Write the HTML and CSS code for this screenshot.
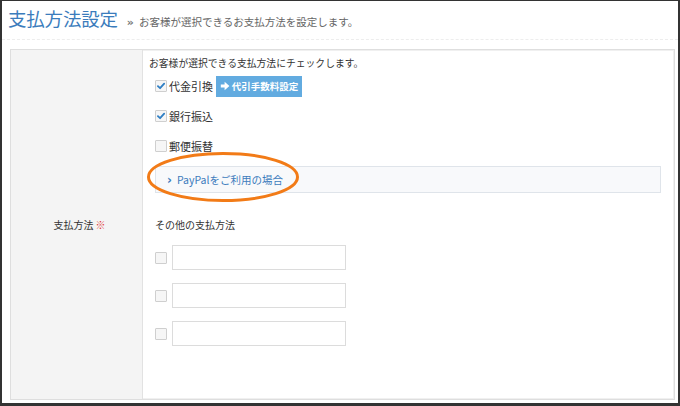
FILE: index.html
```html
<!DOCTYPE html>
<html lang="ja">
<head>
<meta charset="utf-8">
<link rel="stylesheet" href="styles.css">
</head>
<body>
<div class="frame">
  <header class="page-head">
    <h1 class="title">支払方法設定</h1>
    <span class="raquo">»</span>
    <span class="subtitle">お客様が選択できるお支払方法を設定します。</span>
  </header>
  <div class="table">
    <div class="label-cell"><span>支払方法</span><span class="req">※</span></div>
    <div class="value-cell">
      <p class="note">お客様が選択できる支払方法にチェックします。</p>
      <div class="opt opt-first">
        <span class="cb checked"><svg viewBox="0 0 12 12" width="12" height="12"><path d="M2.3 6.2 L4.9 8.6 L9.8 3.2" fill="none" stroke="#2f7fc4" stroke-width="2.2" stroke-linecap="round" stroke-linejoin="round"/></svg></span>
        <span class="opt-label">代金引換</span>
        <span class="btn"><svg class="btn-arrow" viewBox="0 0 10 10" width="10" height="10"><path d="M0.8 3.4 H4.6 V0.8 L9.4 5 L4.6 9.2 V6.6 H0.8 Z" fill="#fff"/></svg>代引手数料設定</span>
      </div>
      <div class="opt">
        <span class="cb checked"><svg viewBox="0 0 12 12" width="12" height="12"><path d="M2.3 6.2 L4.9 8.6 L9.8 3.2" fill="none" stroke="#2f7fc4" stroke-width="2.2" stroke-linecap="round" stroke-linejoin="round"/></svg></span>
        <span class="opt-label">銀行振込</span>
      </div>
      <div class="opt">
        <span class="cb"></span>
        <span class="opt-label">郵便振替</span>
      </div>
      <div class="paypal"><span class="chev">›</span>PayPalをご利用の場合</div>
      <p class="other">その他の支払方法</p>
      <div class="other-row"><span class="cb"></span><span class="input"></span></div>
      <div class="other-row"><span class="cb"></span><span class="input"></span></div>
      <div class="other-row"><span class="cb"></span><span class="input"></span></div>
    </div>
  </div>
  <svg class="annot" viewBox="0 0 154 52" width="154" height="52"><ellipse cx="77" cy="26" rx="74.5" ry="23.5" fill="none" stroke="#f27b17" stroke-width="3"/></svg>
</div>
</body>
</html>
```
FILE: styles.css
```css
* { box-sizing: border-box; }
html, body { margin: 0; padding: 0; background: #333; }
body { font-family: "Noto Sans CJK JP", "Noto Sans", sans-serif; color: #333; }
.frame {
  position: relative;
  width: 680px;
  height: 406px;
  background: #fff;
  border-style: solid;
  border-color: #333;
  border-width: 1px 2px 3px 2px;
  display: flex;
  flex-direction: column;
}
.page-head {
  height: 39px;
  border-bottom: 1px dashed #ededed;
  display: flex;
  align-items: baseline;
  padding-left: 6px;
  padding-top: 4px;
}
.title {
  margin: 0;
  font-size: 18.5px;
  font-weight: normal;
  color: #3b7cbc;
  line-height: 26px;
  letter-spacing: -0.2px;
}
.raquo {
  font-family: "DejaVu Sans", sans-serif;
  font-size: 11px;
  color: #777;
  margin-left: 9px;
  margin-right: 5px;
  font-weight: bold;
}
.subtitle { font-size: 10.5px; color: #666; }
.table {
  margin: 9px 0 0 8px;
  width: 665px;
  height: 351px;
  border: 1px solid #dedede;
  box-shadow: inset 0 0 0 1px #f0f0f0;
  display: flex;
}
.label-cell {
  width: 132px;
  background: #f4f4f4;
  border-right: 1px solid #e2e2e2;
  display: flex;
  align-items: center;
  justify-content: center;
  font-size: 10px;
  color: #333;
  padding-left: 6px;
}
.req { color: #e23c3c; margin-left: 2px; font-size: 10px; }
.value-cell {
  flex: 1;
  padding: 6px 11px 0 6px;
  display: flex;
  flex-direction: column;
}
.note { margin: 0; font-size: 9.8px; line-height: 14px; }
.opt {
  display: flex;
  align-items: center;
  padding-left: 6px;
  height: 22px;
  margin-top: 6px;
}
.opt + .opt { margin-top: 8px; }
.opt-first { margin-top: 5px; }
.cb {
  width: 12px;
  height: 12px;
  border: 1px solid #cfcfcf;
  background: #f6f6f6;
  border-radius: 1px;
  display: inline-flex;
  align-items: center;
  justify-content: center;
  flex: none;
}
.cb svg { display: block; }
.opt-label { font-size: 11px; margin-left: 2px; }
.btn {
  margin-left: 3px;
  height: 21px;
  width: 86px;
  background: #62abe0;
  color: #fff;
  font-size: 9.5px;
  font-weight: bold;
  display: inline-flex;
  align-items: center;
  justify-content: center;
}
.btn-arrow { margin-right: 2px; }
.paypal {
  margin: 9px 0 0 6px;
  width: 506px;
  height: 27px;
  background: #f8f9fb;
  border: 1px solid #dfe4ea;
  color: #3d7cbd;
  font-size: 10.5px;
  display: flex;
  align-items: center;
  padding-left: 11px;
}
.chev { font-family: "DejaVu Sans", sans-serif; font-size: 12px; margin-right: 5px; font-weight: bold; }
.other { margin: 25px 0 0 6px; font-size: 10px; line-height: 14px; }
.other-row {
  display: flex;
  align-items: center;
  padding-left: 6px;
  margin-top: 13px;
}
.input {
  margin-left: 5px;
  width: 174px;
  height: 25px;
  border: 1px solid #dcdcdc;
  background: #fff;
}
.annot { position: absolute; left: 144px; top: 150px; }
```
